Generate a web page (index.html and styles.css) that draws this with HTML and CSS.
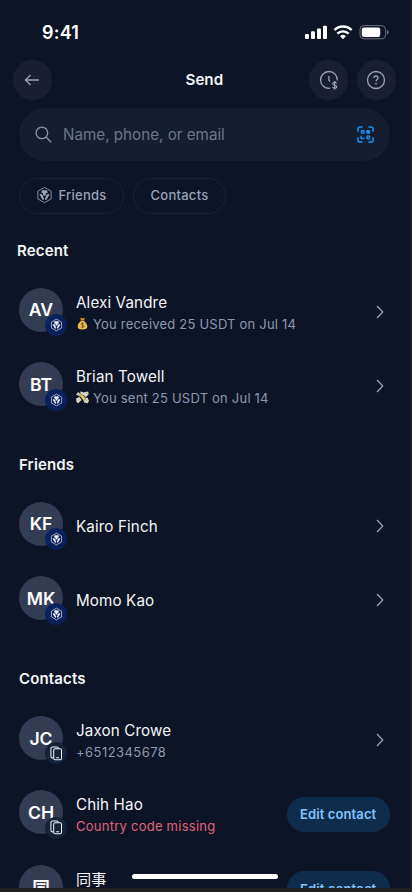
FILE: index.html
```html
<!DOCTYPE html>
<html lang="en">
<head>
<meta charset="utf-8">
<title>Send</title>
<link rel="stylesheet" href="styles.css">
</head>
<body>
<svg class="defs" aria-hidden="true">
  <symbol id="cro" viewBox="0 0 24 24">
    <path d="M12 1.2 21.4 6.6V17.4L12 22.8 2.6 17.4V6.6Z" fill="none" stroke="currentColor" stroke-width="1.2"/>
    <path d="M8.4 5.300h7.200l.9 3.900h-9Z M9.700 9.200h4.600l-.9 3.800h-2.800Z M5 11.400l2.200-1.300 3 2.800-.5 1.700 1.500 1.300v2.700H9.200Z M19 11.400l-2.200-1.300-3 2.800.5 1.700-1.500 1.300v2.700h2Z" fill="currentColor"/>
  </symbol>
  <symbol id="phones" viewBox="0 0 14 16">
    <g fill="none" stroke="currentColor" stroke-width="1.1"><path d="M3.5 12.7H2.6A1.6 1.6 0 0 1 1 11.1V2.5A1.6 1.6 0 0 1 2.6.9h4.8A1.6 1.6 0 0 1 9 2.5"/><rect x="4" y="2.8" width="8.4" height="12" rx="1.6"/><path d="M6.6 12.6h3.2"/></g>
  </symbol>
  <symbol id="chev" viewBox="0 0 8 14"><path d="m1 1 5.8 6L1 13" fill="none" stroke="currentColor" stroke-width="1.2"/></symbol>
</svg>
<div class="screen">
  <div class="status">
    <span class="time">9:41</span>
    <svg class="signals" viewBox="0 0 86 16">
      <g fill="#fff"><rect x="1" y="10" width="4" height="5" rx="1"/><rect x="7" y="7.3" width="4" height="7.7" rx="1"/><rect x="13" y="4.6" width="4" height="10.4" rx="1"/><rect x="19" y="1.8" width="4" height="13.2" rx="1"/></g>
      <g fill="none" stroke="#fff" stroke-width="2.4"><path d="M30.4 6.2a12 12 0 0 1 17.2 0"/><path d="M33.4 9.7a7.8 7.8 0 0 1 11.2 0"/></g>
      <path d="m39 15.2-2.9-3a4.2 4.2 0 0 1 5.8 0Z" fill="#fff"/>
      <rect x="56" y="1.6" width="25.6" height="13.2" rx="4" fill="none" stroke="#6b707d"/>
      <rect x="57.8" y="3.4" width="18.4" height="9.6" rx="2.2" fill="#fff"/>
      <path d="M83 6v4.6c1-.5 1.5-1.2 1.5-2.3S84 6.5 83 6Z" fill="#777b87"/>
    </svg>
  </div>
  <header class="nav">
    <button class="round"><svg width="16" height="12" viewBox="0 0 16 12"><path d="M15 6H1.5M6.5 1l-5 5 5 5" fill="none" stroke="currentColor" stroke-width="1.3"/></svg></button>
    <h1>Send</h1>
    <div class="actions">
      <button class="round"><svg width="20" height="20" viewBox="0 0 20 20"><g fill="none" stroke="currentColor" stroke-width="1.3"><path d="M11.2 18.2A8.4 8.4 0 1 1 18.3 10.5"/><path d="M9.9 6v4.300l1.200 1.200"/><path d="M17.500 13.400c-.3-.8-.9-1.200-1.800-1.200-1.100 0-1.900.6-1.900 1.500 0 2.100 4 1 4 3.100 0 .9-.8 1.500-2 1.500-1.100 0-1.900-.5-2.100-1.400M15.700 11v8.600" stroke-width="1.200"/></g></svg></button>
      <button class="round"><svg width="20" height="20" viewBox="0 0 20 20"><circle cx="10" cy="10" r="8.5" fill="none" stroke="currentColor" stroke-width="1.3"/><path d="M8 8c0-1.200.8-2 2-2s2 .8 2 1.900c0 1.500-2 1.700-2 3.400" fill="none" stroke="currentColor" stroke-width="1.3"/><circle cx="10" cy="13.6" r=".9" fill="currentColor"/></svg></button>
    </div>
  </header>
  <div class="search">
    <svg width="17" height="17" viewBox="0 0 17 17"><g fill="none" stroke="#8e96ab" stroke-width="1.3"><circle cx="6.9" cy="6.9" r="5.8"/><path d="m11 11 5.2 5.2"/></g></svg>
    <span>Name, phone, or email</span>
    <svg class="scan" width="17" height="17" viewBox="0 0 17 17"><g fill="none" stroke="#1690f5" stroke-width="1.5"><path d="M.9 5.700V3A2.100 2.100 0 0 1 3 .9h2.700M11.300.9H14A2.100 2.100 0 0 1 16.100 3v2.700M16.100 11.300V14a2.100 2.100 0 0 1-2.100 2.100h-2.700M5.700 16.100H3A2.100 2.100 0 0 1 .9 14v-2.700"/><circle cx="5.7" cy="5.9" r="1.4"/><circle cx="11.3" cy="11.4" r="1.4"/><path d="M4.200 9.800v2.800h3.200"/></g><rect x="9.3" y="4" width="3.8" height="3.8" rx=".8" fill="#1690f5"/></svg>
  </div>
  <div class="chips">
    <span class="chip friends"><svg width="17" height="18"><use href="#cro"/></svg>Friends</span>
    <span class="chip">Contacts</span>
  </div>

  <section>
    <h2 class="recent">Recent</h2>
    <div class="row">
      <div class="pic"><div class="avatar">AV</div><div class="badge"><svg width="13" height="14"><use href="#cro"/></svg></div></div>
      <div class="info"><div class="name">Alexi Vandre</div>
        <div class="sub"><svg class="emoji" viewBox="0 0 13 13"><path d="M4.3.8 6.500 1.400 8.700.7 8 3.600H5Z" fill="#d99b36"/><path d="M5 3.900h3c2 1.500 3.300 3.400 3.300 5.500 0 2.200-1.500 3-4.800 3s-4.800-.8-4.800-3c0-2.100 1.300-4 3.300-5.500Z" fill="#edbd55"/><path d="M4.500 3.700h4" stroke="#8d5921"/><path d="M8.100 6.800C7.700 6.200 5 5.900 5 7.200s3.200.7 3.200 2.100S5.300 10.700 4.800 9.800M6.500 5.300v6" fill="none" stroke="#805823" stroke-width=".9"/></svg>You received 25 USDT on Jul 14</div></div>
      <svg class="chev"><use href="#chev"/></svg>
    </div>
    <div class="row">
      <div class="pic"><div class="avatar">BT</div><div class="badge"><svg width="13" height="14"><use href="#cro"/></svg></div></div>
      <div class="info"><div class="name">Brian Towell</div>
        <div class="sub"><svg class="emoji" viewBox="0 0 13 13"><g fill="#dedbd0"><path d="M.1 3.500 2.200 1l3.300 3.300-1.200 1.500Z"/><path d="M4.300.6 8 1.600 7.700 4.500 4.500 3.600Z"/><path d="M8.300 1.200 12.200.6l.5 2.600-3 3-2.500-2.600Z"/><path d="M.1 7.500 3.500 6l2 2.900L2 12.200.4 10.800Z"/><path d="M8 7.800 11.300 6.500l1.600 2.900-1 2.800-3.900-.8Z"/></g><path d="m3 4 2.500-1.800 5 5.700L8 10.500Z" fill="#b9ab58"/><path d="m5.300 4.500 3.200 3.700" stroke="#e2c969" stroke-width="1.500"/><path d="m1.500 3 2 1.300M10 2.600l1.600-.4M1.800 9.600l1.400-1M10 9.500l1.500.6" stroke="#8f8d83" stroke-width=".7"/></svg>You sent 25 USDT on Jul 14</div></div>
      <svg class="chev"><use href="#chev"/></svg>
    </div>
  </section>

  <section>
    <h2>Friends</h2>
    <div class="row">
      <div class="pic"><div class="avatar">KF</div><div class="badge"><svg width="13" height="14"><use href="#cro"/></svg></div></div>
      <div class="info"><div class="name">Kairo Finch</div></div>
      <svg class="chev"><use href="#chev"/></svg>
    </div>
    <div class="row">
      <div class="pic"><div class="avatar">MK</div><div class="badge"><svg width="13" height="14"><use href="#cro"/></svg></div></div>
      <div class="info"><div class="name">Momo Kao</div></div>
      <svg class="chev"><use href="#chev"/></svg>
    </div>
  </section>

  <section>
    <h2>Contacts</h2>
    <div class="row">
      <div class="pic"><div class="avatar">JC</div><div class="badge device"><svg width="13" height="15"><use href="#phones"/></svg></div></div>
      <div class="info"><div class="name">Jaxon Crowe</div><div class="sub phone">+6512345678</div></div>
      <svg class="chev"><use href="#chev"/></svg>
    </div>
    <div class="row">
      <div class="pic"><div class="avatar">CH</div><div class="badge device"><svg width="13" height="15"><use href="#phones"/></svg></div></div>
      <div class="info"><div class="name">Chih Hao</div><div class="sub error">Country code missing</div></div>
      <button class="edit">Edit contact</button>
    </div>
    <div class="row">
      <div class="pic"><div class="avatar">同</div><div class="badge device"><svg width="13" height="15"><use href="#phones"/></svg></div></div>
      <div class="info"><div class="name cjk">同事</div></div>
      <button class="edit">Edit contact</button>
    </div>
  </section>
  <div class="home"></div>
</div>
</body>
</html>
```
FILE: styles.css
```css
* { box-sizing: border-box; }
html, body { margin: 0; height: 892px; overflow: hidden; }
body {
  background: #1e1e1f;
  color: #f4f5f8;
  font-family: Inter, "Noto Sans CJK SC", sans-serif;
}
button { font: inherit; border: 0; padding: 0; }
svg { display: block; flex: none; }
.defs { position: absolute; width: 0; height: 0; }
.screen {
  position: relative;
  width: 409.7px;
  height: 887.7px;
  overflow: hidden;
  background: #0d1425;
}
.status {
  height: 60px;
  padding: 5px 20px 0 42px;
  display: flex;
  align-items: center;
  justify-content: space-between;
}
.time { font-size: 18px; font-weight: 600; letter-spacing: 0.2px; color: #fff; }
.signals { width: 86px; height: 16px; margin-bottom: 1px; }
.nav {
  height: 40px;
  padding: 0 13.5px 0 12.5px;
  display: grid;
  grid-template-columns: 1fr auto 1fr;
  align-items: center;
}
.nav h1 { margin: 0; padding-bottom: 1px; font-size: 15.2px; font-weight: 600; color: #f4f5f8; }
.round {
  width: 39.4px;
  height: 39.4px;
  border-radius: 50%;
  background: #191f31;
  color: #9ba2b5;
  display: flex;
  align-items: center;
  justify-content: center;
}
.actions { display: flex; gap: 8.6px; justify-content: flex-end; }
.search {
  margin: 8px 20px 0 19px;
  height: 53px;
  border-radius: 27px;
  background: #151d31;
  display: flex;
  align-items: center;
  padding: 0 16px;
  gap: 11px;
  font-size: 15.2px;
  color: #6d758a;
}
.scan { margin-left: auto; }
.chips { display: flex; gap: 9px; margin: 17px 19px 0; height: 36px; }
.chip {
  height: 35.5px;
  width: 93px;
  border: 1px solid #1a2133;
  border-radius: 18px;
  display: flex;
  align-items: center;
  justify-content: center;
  gap: 5px;
  padding-bottom: 1px;
  font-size: 13px;
  font-weight: 500;
  letter-spacing: 0.25px;
  color: #9ba3b8;
}
.friends { width: 105px; }
section { margin: 0 20px 0 19px; }
section:first-of-type { margin-top: -4.5px; }
h2 {
  margin: 0;
  height: 65.4px;
  padding-top: 31.5px;
  line-height: 20px;
  font-size: 15px;
  font-weight: 600;
  letter-spacing: 0.15px;
}
.recent { margin-left: -2px; }
.row { height: 74.33px; display: flex; align-items: center; }
.pic { position: relative; width: 48.3px; height: 48.3px; margin-right: 8.7px; flex: none; }
.avatar {
  width: 44px;
  height: 44px;
  border-radius: 50%;
  background: #343c54;
  color: #fff;
  font-size: 17.6px;
  font-weight: 600;
  display: flex;
  align-items: center;
  justify-content: center;
}
.badge {
  position: absolute;
  right: 0;
  bottom: 0;
  width: 22px;
  height: 22px;
  border-radius: 50%;
  background: linear-gradient(135deg, #07245f, #0b1d55);
  color: #f0f3fa;
  display: flex;
  align-items: center;
  justify-content: center;
}
.device { background: #14223a; }
.info { flex: 1; padding-top: 1.2px; }
.name { font-size: 15.2px; line-height: 22px; letter-spacing: 0.12px; }
.cjk { padding-bottom: 19px; }
.sub {
  display: flex;
  align-items: center;
  gap: 4px;
  font-size: 13px;
  line-height: 20px;
  letter-spacing: 0.21px;
  color: #8f98ae;
  white-space: nowrap;
}
.phone { letter-spacing: 0.45px; }
.error { color: #e0637a; letter-spacing: 0.25px; }
.emoji { width: 13px; height: 13px; }
.chev { width: 8px; height: 14px; margin-right: 6px; color: #a1a8b8; }
.edit {
  width: 103px;
  height: 35px;
  border-radius: 18px;
  background: #0e2d4c;
  color: #84c4fa;
  font-size: 13px;
  font-weight: 600;
  letter-spacing: 0.1px;
}
.home {
  position: absolute;
  left: 132px;
  top: 873.6px;
  width: 146px;
  height: 5.6px;
  border-radius: 3px;
  background: #fff;
}
```
